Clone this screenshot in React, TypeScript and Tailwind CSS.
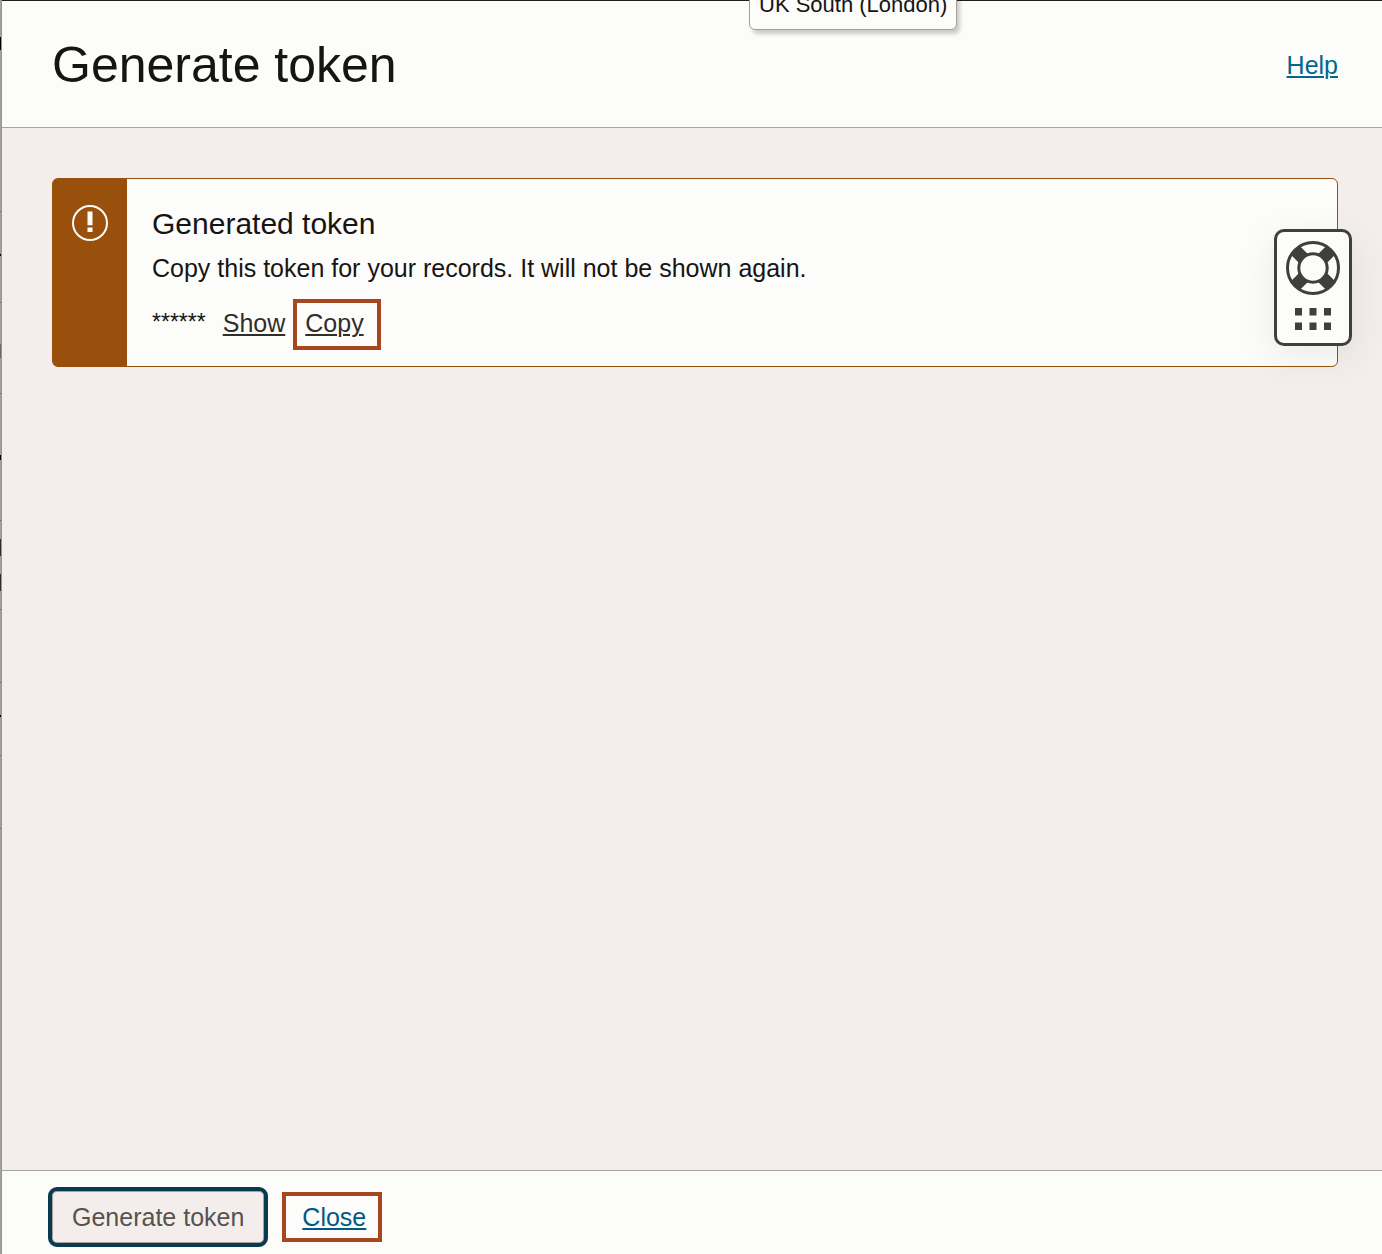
import React from "react";

function WarningIcon() {
  return (
    <svg width="36" height="36" viewBox="0 0 36 36" fill="none" aria-hidden="true">
      <circle cx="18" cy="18" r="17" stroke="#fcfcfb" strokeWidth="2" />
      <path d="M15.5 6.5h5v13.8h-5zM15.5 22.5h5v4.5h-5z" fill="#fcfcfb" />
    </svg>
  );
}

function LifebuoyIcon() {
  return (
    <svg width="54" height="54" viewBox="0 0 54 54" fill="none" stroke="#403f3a" aria-hidden="true">
      <g strokeWidth="12.5">
        <path d="M8.8 8.8L18 18M45.2 8.8L36 18M8.8 45.2L18 36M45.2 45.2L36 36" />
      </g>
      <circle cx="27" cy="27" r="25.5" strokeWidth="3" />
      <circle cx="27" cy="27" r="14.2" strokeWidth="3" fill="#fcfcfb" />
    </svg>
  );
}

function DotsIcon() {
  return (
    <svg width="36" height="23" viewBox="0 0 36 23" fill="#403f3a" aria-hidden="true">
      <path d="M0 0h7v7.5H0zM14.5 0h7v7.5h-7zM29 0h7v7.5h-7zM0 14.5h7v7.5H0zM14.5 14.5h7v7.5h-7zM29 14.5h7v7.5h-7z" />
    </svg>
  );
}

// Sliver of the page that stays visible beside the drawer.
const edgeMarks = [
  "mt-[37px] h-[13px] bg-black",
  "mt-[161px] h-px bg-[#6b6968]",
  "mt-[42px] h-[2px] bg-black",
  "mt-[46px] h-px bg-[#6b6968]",
  "mt-[41px] h-[14px] bg-[#6b6968]",
  "mt-[35px] h-px bg-[#6b6968]",
  "mt-[61px] h-[5px] bg-black",
  "mt-[60px] h-px bg-[#6b6968]",
  "mt-[18px] h-[17px] bg-[#312d2a]",
  "mt-[18px] h-[17px] bg-[#312d2a]",
  "mt-[18px] h-px bg-[#6b6968]",
  "mt-[72px] h-px bg-[#6b6968]",
  "mt-[32px] h-[2px] bg-black",
  "mt-[38px] h-px bg-[#6b6968]",
  "mt-[72px] h-px bg-[#6b6968]",
];

function PageEdge() {
  return (
    <div className="flex w-0.5 shrink-0 flex-col border-r border-[#979593] bg-[#a3a19f]" aria-hidden="true">
      {edgeMarks.map((mark, i) => (
        <span key={i} className={mark} />
      ))}
    </div>
  );
}

export default function App() {
  return (
    <div className="flex min-h-screen bg-[#f3eeeb] font-['Liberation_Sans',Arial,sans-serif] text-[25px] leading-[30px] text-[#161513]">
      <PageEdge />
      <div className="relative flex min-w-0 flex-1 flex-col">
        <header className="flex h-32 items-center justify-between border-t border-b border-t-[#201e1c] border-b-[#a8a4a0] bg-[#fcfcfb] pt-px pr-11 pl-[50px]">
          <h1 className="text-[50px] leading-[60px]">Generate token</h1>
          <a href="#help" className="text-[#00688c] underline decoration-2 underline-offset-2">Help</a>
        </header>
        <div
          role="tooltip"
          className="absolute -top-4 left-[747px] rounded-md border border-[#a39e99] bg-[#fcfcfb] px-[9px] pt-[7px] pb-[11px] text-[22px] leading-[26px] whitespace-nowrap shadow-[3px_4px_4px_rgba(0,0,0,0.2)]"
        >
          UK South (London)
        </div>

        <main className="flex-1 pt-[50px] pr-11 pl-[50px]">
          <section className="relative flex rounded-md border border-[#99500c] bg-[#fcfcfb]">
            <div className="flex w-[74px] shrink-0 justify-center rounded-l-[4px] bg-[#99500c] pt-[26px]">
              <WarningIcon />
            </div>
            <div className="flex-1 pt-[27px] pb-4 pl-[25px]">
              <h2 className="text-[30px] leading-9">Generated token</h2>
              <p className="mt-[11px]">Copy this token for your records. It will not be shown again.</p>
              <div className="mt-4 flex items-start">
                <span className="mt-2 mr-[17px] text-[23px]">******</span>
                <button type="button" className="mt-[9px] text-[#312d2a] underline decoration-2 underline-offset-2">Show</button>
                <span className="ml-2 h-[51px] border-4 border-[#a5481d] pt-[5px] pr-[13px] pl-2">
                  <button type="button" className="text-[#312d2a] underline decoration-2 underline-offset-2">Copy</button>
                </span>
              </div>
            </div>
            <button
              type="button"
              aria-label="Open support menu"
              className="absolute top-[50px] -right-[15px] flex h-[117px] w-[78px] flex-col items-center gap-[13px] rounded-[10px] border-3 border-[#403f3a] bg-[#fcfcfb] pt-[9px] shadow-[0_10px_40px_rgba(0,0,0,0.08)]"
            >
              <LifebuoyIcon />
              <DotsIcon />
            </button>
          </section>
        </main>

        <footer className="flex h-[84px] items-start gap-3.5 border-t border-[#a8a4a0] bg-[#fcfcfb] pt-4 pl-[46px]">
          <button
            type="button"
            className="h-[60px] rounded-[9px] border-4 border-[#0b3a50] bg-[#f3eeeb] px-5 text-[#57524e] inset-ring inset-ring-[#a8a29d]"
          >
            Generate token
          </button>
          <span className="mt-[5px] flex h-[50px] items-center border-4 border-[#a5481d] pr-3 pl-4">
            <a href="#close" className="text-[#005a83] underline decoration-2 underline-offset-2">Close</a>
          </span>
        </footer>
      </div>
    </div>
  );
}
